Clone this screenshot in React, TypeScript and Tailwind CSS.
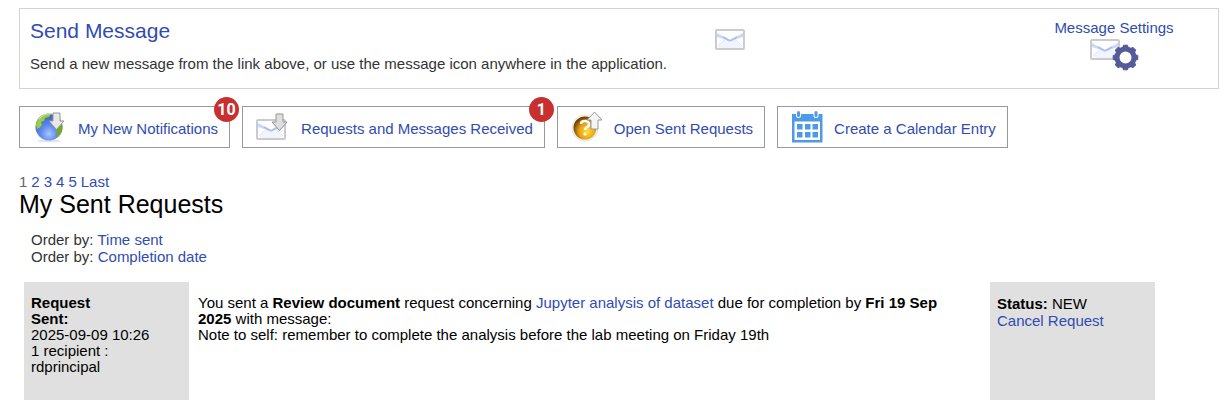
import React from "react";

const linkStyle = "text-[#304cb2] hover:underline";

function Envelope() {
  return (
    <g>
      <rect x="1" y="1" width="28" height="19" rx="1" fill="#fdfdff" stroke="#cbcbcd" strokeWidth="2" />
      <path d="M2 19 L11 10 L15 13 L19 10 L28 19 Z" fill="#f1f4fc" />
      <path d="M2 4 L13 10 Q15 11.500 17 10 L28 4 V8 L20 10.500 L15 13 L10 10.500 L2 8 Z" fill="#cbd8f5" />
      <path d="M8 8 L13.500 11 Q15 12 16.500 11 L22 8" fill="none" stroke="#a9beec" strokeWidth="1.500" />
      <path d="M3 17 L10 10.500 M27 17 L20 10.500" fill="none" stroke="#dbe4f8" />
    </g>
  );
}

function EnvelopeIcon() {
  return (
    <svg width="30" height="21" viewBox="0 0 30 21" aria-hidden="true">
      <Envelope />
    </svg>
  );
}

function EnvelopeGearIcon() {
  const teeth = [0, 45, 90, 135, 180, 225, 270, 315];

  return (
    <svg width="49" height="32" viewBox="0 0 49 32" aria-hidden="true">
      <Envelope />
      <g transform="translate(35.500 18.500)">
        {teeth.map((angle) => (
          <path
            key={angle}
            d="M-3 -9 L-2 -12.300 H2 L3 -9 Z"
            fill="#555a99"
            stroke="#555a99"
            strokeLinejoin="round"
            transform={`rotate(${angle})`}
          />
        ))}
        <circle r="8.500" fill="#fff" stroke="#555a99" strokeWidth="5" />
      </g>
    </svg>
  );
}

function GlobeIcon() {
  return (
    <svg width="34" height="32" viewBox="-1 0 34 32" aria-hidden="true">
      <defs>
        <radialGradient id="ocean" cx="0.5" cy="0.75" r="0.75">
          <stop offset="0" stopColor="#a9c5ff" />
          <stop offset="0.4" stopColor="#5f8cee" />
          <stop offset="1" stopColor="#3459ba" />
        </radialGradient>
      </defs>
      <ellipse cx="15" cy="30" rx="12" ry="1.500" fill="#e4e4e4" />
      <circle cx="15" cy="16" r="13.500" fill="url(#ocean)" />
      <path d="M2 13 Q4 5 12 3 L17 3 L15 6 L11 7 L10 10 L7 11 L8 14 L5 17 L3 18 Z" fill="#9bcd3e" />
      <path d="M20 15 L28 13 Q30 21 24 26 L22 23 L23 20 Z" fill="#75aa28" />
      <path d="M5 8 Q12 0 21 4" fill="none" stroke="#d9efb0" />
      <path d="M19 2 H26 V10 H30 L22.500 18.500 L15 10 H19 Z" fill="#e8e8e8" stroke="#969696" />
    </svg>
  );
}

function EnvelopeDownIcon() {
  return (
    <svg width="34" height="28" viewBox="0 0 34 28" aria-hidden="true">
      <g transform="translate(0 6)">
        <Envelope />
      </g>
      <path d="M20 1 H27 V9 H31 L23.500 17.500 L16 9 H20 Z" fill="#dedede" stroke="#969696" />
    </svg>
  );
}

function QuestionUpIcon() {
  return (
    <svg width="32" height="32" viewBox="0 0 32 32" aria-hidden="true">
      <defs>
        <radialGradient id="amber" cx="0.6" cy="0.65" r="0.65">
          <stop offset="0" stopColor="#ffe13c" />
          <stop offset="0.55" stopColor="#e6a014" />
          <stop offset="1" stopColor="#6e3900" />
        </radialGradient>
      </defs>
      <circle cx="14" cy="17" r="13" fill="#f3f3f3" stroke="#e6e6e6" />
      <circle cx="14" cy="17" r="11.500" fill="url(#amber)" />
      <path d="M10 13 Q10 10 14 10 Q18 10 18 13.500 Q18 15.500 15.500 16.500 Q14 17.500 14 19" fill="none" stroke="#fff" strokeWidth="2.500" />
      <circle cx="14" cy="23" r="1.600" fill="#fff" />
      <path d="M23.500 1 L31 9 H27 V18 H20 V9 H16 Z" fill="#f4f4f4" stroke="#969c94" />
    </svg>
  );
}

function CalendarIcon() {
  return (
    <svg width="32" height="32" viewBox="0 0 32 32" fill="#4f99e7" aria-hidden="true">
      <path d="M1 3 H31.500 V31.500 H1 Z M3.500 10.500 V29 H29 V10.500 Z" fillRule="evenodd" />
      <rect x="5" y="0" width="5" height="7" rx="2.500" fill="#fff" />
      <rect x="22.500" y="0" width="5" height="7" rx="2.500" fill="#fff" />
      <rect x="6" y="0" width="3" height="6" rx="1.500" />
      <rect x="23.500" y="0" width="3" height="6" rx="1.500" />
      {[6, 14, 21.5].map((x) => (
        <React.Fragment key={x}>
          <rect x={x} y="13" width="5.500" height="5.500" />
          <rect x={x} y="21" width="5.500" height="5.500" />
        </React.Fragment>
      ))}
    </svg>
  );
}

const tabs = [
  { label: "My New Notifications", icon: <GlobeIcon />, count: 10 },
  { label: "Requests and Messages Received", icon: <EnvelopeDownIcon />, count: 1 },
  { label: "Open Sent Requests", icon: <QuestionUpIcon /> },
  { label: "Create a Calendar Entry", icon: <CalendarIcon /> },
];

function SendMessagePanel() {
  return (
    <section className="grid grid-cols-[58%_1fr_208px] border border-[#d3d3d3] pb-3">
      <div className="pl-[10px] pt-2">
        <h2 className="text-[21px] leading-7">
          <a href="#send" className={linkStyle}>
            Send Message
          </a>
        </h2>
        <p className="mt-[7px] whitespace-nowrap text-[15px] leading-6 text-[#333]">
          Send a new message from the link above, or use the message icon anywhere in the application.
        </p>
      </div>
      <a href="#send" aria-label="Send Message" className="mt-5 justify-self-start">
        <EnvelopeIcon />
      </a>
      <a
        href="#settings"
        className={`${linkStyle} flex flex-col items-center pt-2 text-[15px] leading-[22px]`}
      >
        Message Settings
        <EnvelopeGearIcon />
      </a>
    </section>
  );
}

function MessageTabs() {
  return (
    <nav className="mt-[17px] flex flex-wrap gap-3">
      {tabs.map(({ label, icon, count }) => (
        <a
          key={label}
          href="#messages"
          className="relative flex h-[42px] items-center gap-[11px] border border-[#999] px-[13px] pr-[11px] text-[15px] leading-5 text-[#304cb2]"
        >
          {icon}
          <span className="pt-1">{label}</span>
          {count && (
            <span className="absolute -right-[10px] -top-[10px] flex size-[25px] items-center justify-center rounded-full bg-[#c7302f] font-['Roboto',sans-serif] text-base font-bold text-white">
              {count}
            </span>
          )}
        </a>
      ))}
    </nav>
  );
}

function SentRequest() {
  return (
    <article className="ml-[5px] mr-16 mt-[17px] flex min-h-[118px] text-[15px] leading-4 text-black">
      <div className="w-[165px] shrink-0 bg-[#e0e0e0] px-[7px] pt-[13px]">
        <strong className="block w-20">Request Sent:</strong>
        <p>2025-09-09 10:26</p>
        <p>1 recipient :</p>
        <p>rdprincipal</p>
      </div>
      <div className="flex-1 pl-[9px] pr-8 pt-[13px]">
        <p>
          You sent a <strong>Review document</strong> request concerning{" "}
          <a href="#document" className={linkStyle}>
            Jupyter analysis of dataset
          </a>{" "}
          due for completion by <strong>Fri 19 Sep 2025</strong> with message:
        </p>
        <p>Note to self: remember to complete the analysis before the lab meeting on Friday 19th</p>
      </div>
      <div className="w-[165px] shrink-0 bg-[#e0e0e0] px-[7px] pt-[13px] leading-[17px]">
        <p>
          <strong>Status:</strong> NEW
        </p>
        <button type="button" className={linkStyle}>
          Cancel Request
        </button>
      </div>
    </article>
  );
}

export default function App() {
  return (
    <main className="bg-white pb-4 pl-[19px] pr-[9px] pt-2 font-['Liberation_Sans',Arial,sans-serif]">
      <SendMessagePanel />
      <MessageTabs />

      <nav aria-label="Pages" className="mt-6 flex gap-1 text-[15px] leading-5 text-[#666]">
        <span>1</span>
        {["2", "3", "4", "5", "Last"].map((page) => (
          <a key={page} href="#page" className={linkStyle}>
            {page}
          </a>
        ))}
      </nav>
      <h1 className="text-[25px] leading-6 text-black">My Sent Requests</h1>

      <div className="mt-[15px] pl-3 text-[15px] leading-[17px] text-[#333]">
        <p>
          Order by:{" "}
          <a href="#time" className={linkStyle}>
            Time sent
          </a>
        </p>
        <p>
          Order by:{" "}
          <a href="#completion" className={linkStyle}>
            Completion date
          </a>
        </p>
      </div>

      <SentRequest />
    </main>
  );
}
